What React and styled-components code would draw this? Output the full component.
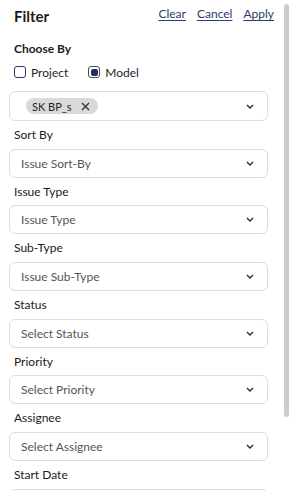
import styled, { createGlobalStyle } from 'styled-components';

const GlobalStyle = createGlobalStyle`
    html, body {
        margin: 0;
        padding: 0;
        background: #ffffff;
        font-family: Lato, 'Open Sans', sans-serif;
    }
`;

const Moldura = styled.div`
    display: flex;
    height: 100vh;
    overflow: hidden;
    background: #ffffff;
`;

const Conteudo = styled.div`
    width: 284px;
    box-sizing: border-box;
    padding-left: 9px;
    overflow: hidden;
`;

const Trilho = styled.div`
    width: 9px;
    padding-top: 4px;
`;

const Polegar = styled.div`
    width: 5px;
    height: 413px;
    border-radius: 3px;
    background: #cbcbcb;
`;

const Cabecalho = styled.div`
    display: flex;
    align-items: flex-start;
    justify-content: space-between;
    width: 265px;
    box-sizing: border-box;
    padding: 5px 0 0 5px;
`;

const Titulo = styled.h1`
    margin: 0;
    font-size: 15px;
    line-height: 22px;
    font-weight: 700;
    color: #1b1b1b;
`;

const Acoes = styled.div`
    display: flex;
    gap: 11px;
`;

const LinkAcao = styled.a`
    font-size: 12px;
    line-height: 18px;
    color: #2b3b6b;
    text-decoration: underline;
    text-underline-offset: 2px;
    cursor: pointer;
`;

const Subtitulo = styled.h2`
    margin: 14px 0 0 5px;
    font-size: 12px;
    line-height: 16px;
    font-weight: 700;
    color: #1b1b1b;
`;

const LinhaOpcoes = styled.div`
    display: flex;
    gap: 20px;
    margin: 5px 0 0 5px;
    height: 20px;
    align-items: center;
`;

const Opcao = styled.label`
    display: flex;
    align-items: center;
    gap: 5px;
    font-size: 12px;
    color: #1e1e1e;
`;

const Caixa = styled.span`
    width: 12px;
    height: 12px;
    box-sizing: border-box;
    border-radius: 3px;
    border: 1.3px solid ${({ $marcado }) => ($marcado ? '#4a4a4a' : '#2b3b6b')};
    display: flex;
    align-items: center;
    justify-content: center;
    background: #ffffff;

    &::after {
        content: '';
        display: ${({ $marcado }) => ($marcado ? 'block' : 'none')};
        width: 7px;
        height: 7px;
        border-radius: 2px;
        background: #22315f;
    }
`;

const Grupo = styled.div`
    margin-top: ${({ $topo }) => $topo ?? 4.17}px;
`;

const Rotulo = styled.div`
    padding-left: 5px;
    margin-bottom: 3.5px;
    font-size: 12px;
    line-height: 20px;
    color: #1a1a1a;
`;

const Seletor = styled.div`
    width: 259px;
    height: ${({ $alto }) => ($alto ? 30 : 29)}px;
    box-sizing: border-box;
    border: 1px solid #dcdcdc;
    border-radius: 6px;
    display: flex;
    align-items: center;
    justify-content: space-between;
    padding: 0 13px 0 11px;
    font-size: 12px;
    color: #555555;
`;

const Chip = styled.span`
    display: inline-flex;
    align-items: center;
    gap: 9px;
    height: 16px;
    padding: 0 8px 0 6px;
    margin-left: 5px;
    border-radius: 8px;
    background: #d9d9d9;
    font-size: 11px;
    color: #1f1f1f;
`;

const Seta = () => (
    <svg width="8" height="5" viewBox="0 0 8 5">
        <path d="M1 1 L4 4 L7 1" fill="none" stroke="#2a2a2a" strokeWidth="1.4" />
    </svg>
);

const Fechar = () => (
    <svg width="9" height="9" viewBox="0 0 9 9">
        <path d="M1 1 L8 8 M8 1 L1 8" stroke="#2a2a2a" strokeWidth="1.2" />
    </svg>
);

const campos = [
    { rotulo: 'Sort By', texto: 'Issue Sort-By' },
    { rotulo: 'Issue Type', texto: 'Issue Type' },
    { rotulo: 'Sub-Type', texto: 'Issue Sub-Type' },
    { rotulo: 'Status', texto: 'Select Status' },
    { rotulo: 'Priority', texto: 'Select Priority' },
    { rotulo: 'Assignee', texto: 'Select Assignee' },
    { rotulo: 'Start Date', texto: 'Select Start Date' },
    { rotulo: 'End Date', texto: 'Select End Date' },
];

const App = () => {
    return (
        <>
            <GlobalStyle />
            <Moldura>
                <Conteudo>
                    <Cabecalho>
                        <Titulo>Filter</Titulo>
                        <Acoes>
                            <LinkAcao>Clear</LinkAcao>
                            <LinkAcao>Cancel</LinkAcao>
                            <LinkAcao>Apply</LinkAcao>
                        </Acoes>
                    </Cabecalho>
                    <Subtitulo>Choose By</Subtitulo>
                    <LinhaOpcoes>
                        <Opcao>
                            <Caixa />
                            Project
                        </Opcao>
                        <Opcao>
                            <Caixa $marcado />
                            Model
                        </Opcao>
                    </LinhaOpcoes>
                    <Grupo $topo={9}>
                        <Seletor $alto>
                            <Chip>
                                SK BP_s
                                <Fechar />
                            </Chip>
                            <Seta />
                        </Seletor>
                    </Grupo>
                    {campos.map((campo) => (
                        <Grupo key={campo.rotulo}>
                            <Rotulo>{campo.rotulo}</Rotulo>
                            <Seletor>
                                {campo.texto}
                                <Seta />
                            </Seletor>
                        </Grupo>
                    ))}
                </Conteudo>
                <Trilho>
                    <Polegar />
                </Trilho>
            </Moldura>
        </>
    );
};

export default App;
